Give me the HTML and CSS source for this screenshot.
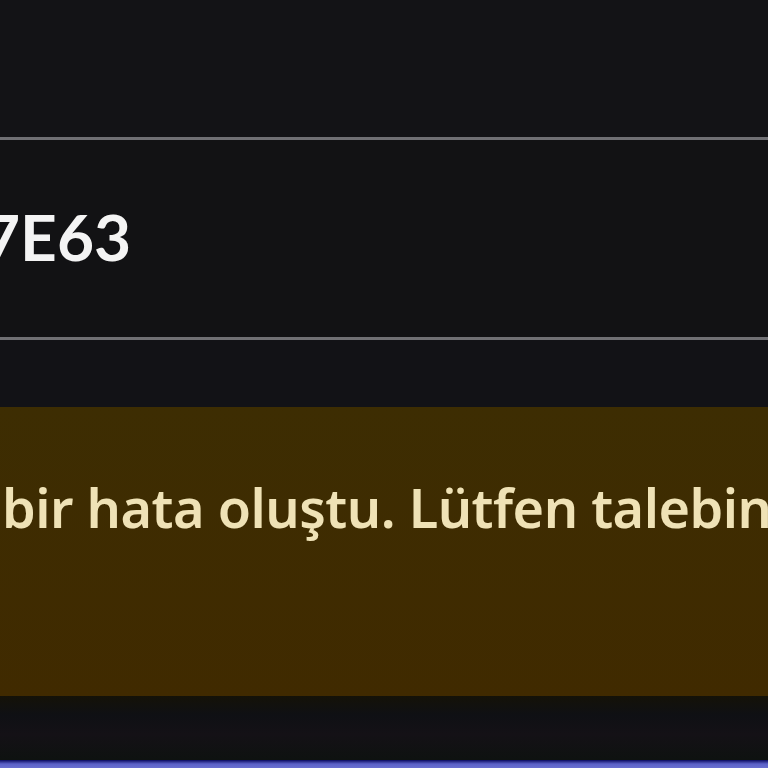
FILE: index.html
```html
<!DOCTYPE html>
<html lang="tr">
<head>
<meta charset="utf-8">
<link rel="stylesheet" href="styles.css">
</head>
<body>
<div class="page">
  <div class="top"></div>
  <div class="field">
    <span class="value">7E63</span>
  </div>
  <div class="gap"></div>
  <div class="banner">
    <p class="msg">bir hata oluştu. Lütfen talebinizi</p>
  </div>
  <div class="footer"></div>
  <div class="accent"></div>
</div>
</body>
</html>
```
FILE: styles.css
```css
html, body {
  margin: 0;
  padding: 0;
  background: #131316;
  overflow: hidden;
}
.page {
  width: 768px;
  height: 768px;
  display: flex;
  flex-direction: column;
  overflow: hidden;
}
.top {
  height: 137px;
  flex: none;
}
.field {
  flex: none;
  height: 197px;
  border-top: 3px solid #707074;
  border-bottom: 3px solid #707074;
  background: #121214;
  display: flex;
  align-items: center;
  overflow: hidden;
}
.value {
  font-family: Lato, "Liberation Sans", sans-serif;
  font-size: 64px;
  font-weight: 700;
  color: #f4f4f4;
  margin-left: -17px;
  white-space: nowrap;
  line-height: 1;
  padding-bottom: 4px;
}
.gap {
  height: 67px;
  flex: none;
  background: #121216;
}
.banner {
  flex: none;
  height: 289px;
  background: linear-gradient(#3d2d02, #402a00);
  overflow: hidden;
}
.msg {
  margin: 0;
  padding-top: 62px;
  margin-left: 2px;
  font-family: "Noto Sans", sans-serif;
  font-size: 54px;
  font-weight: 600;
  letter-spacing: -0.5px;
  line-height: 76px;
  color: #efe2b6;
  white-space: nowrap;
}
.footer {
  flex: 1;
  background: linear-gradient(#141208, #0f1014 30%, #141116 60%, #0e1210);
}
.accent {
  flex: none;
  height: 8px;
  background: linear-gradient(#0a0a60, #5c62c8 50%, #6a70d0);
}
```
